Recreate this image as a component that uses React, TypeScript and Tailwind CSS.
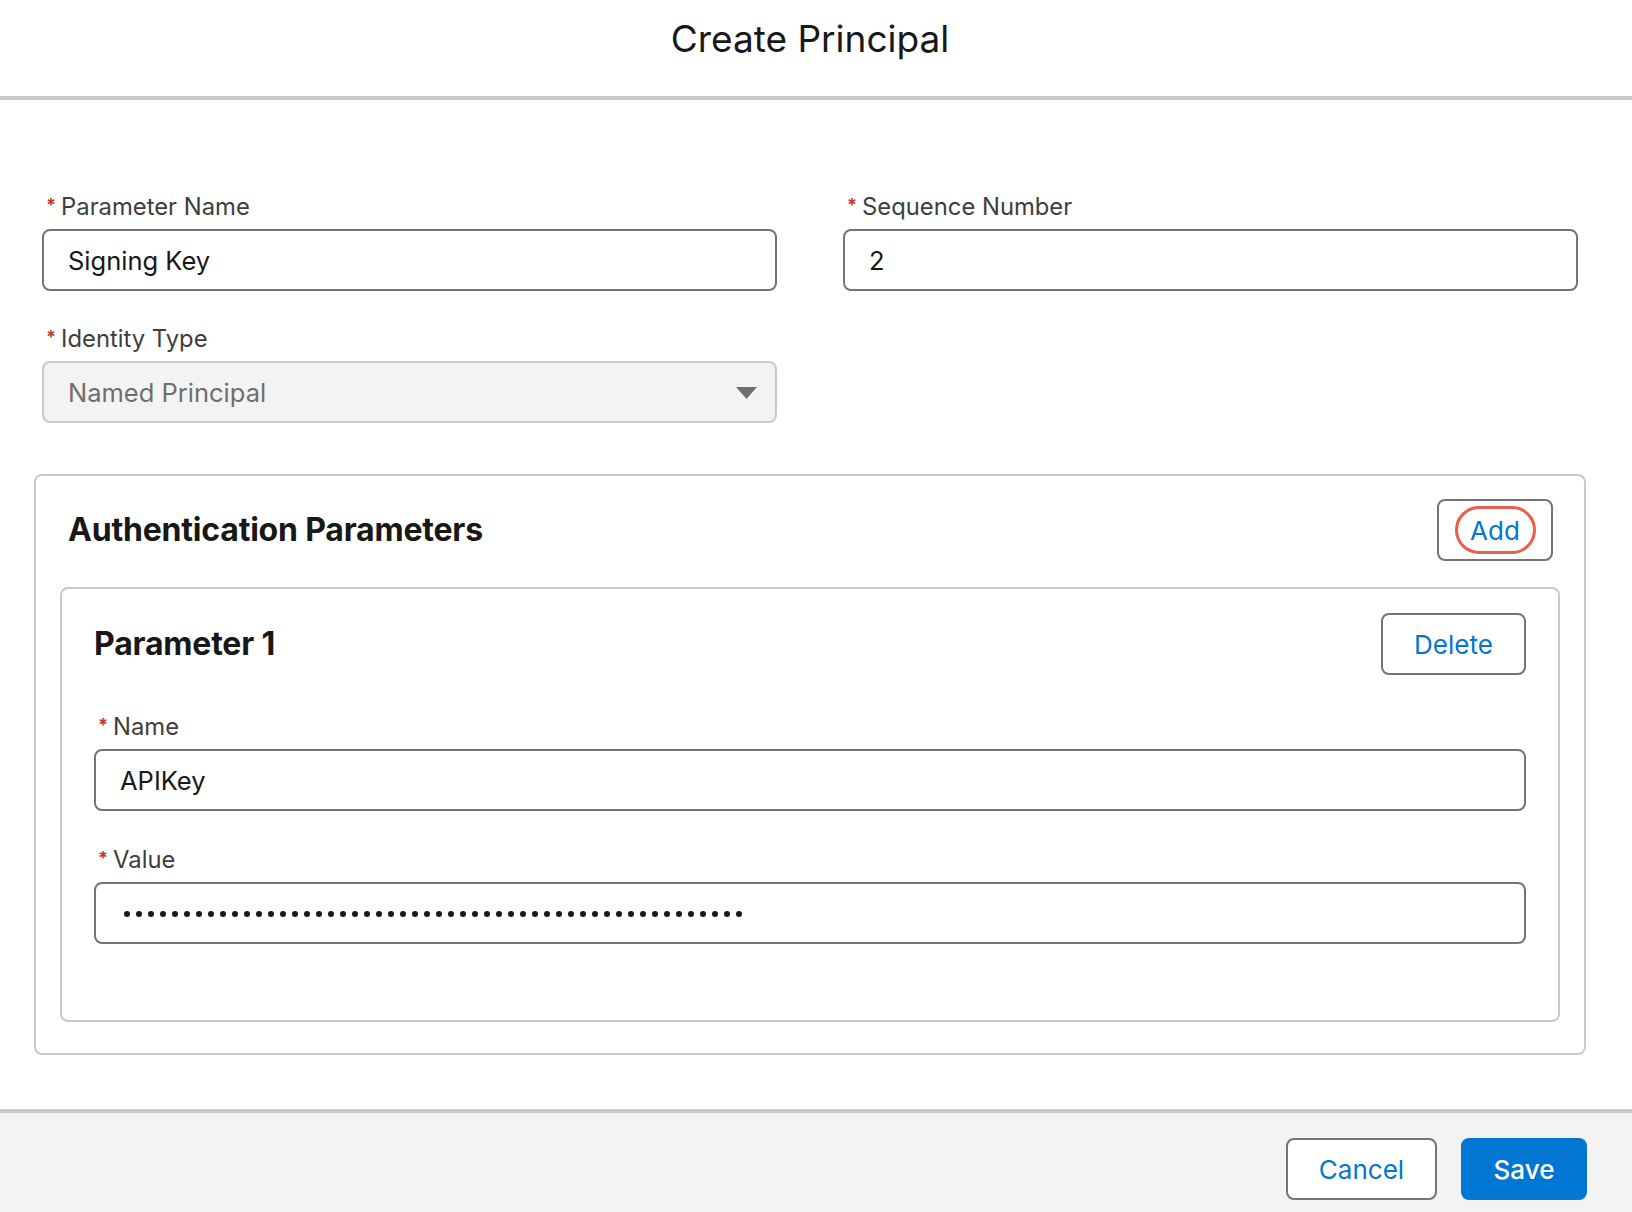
import React from "react";

function Label({ text }: { text: string }) {
  return (
    <div className="flex items-center h-[29px] pt-[1px] mb-[8px] text-[23.8px] text-[#3e3e3c]">
      <span className="ml-[4px] mr-[5px] -mt-[5px] text-[18px] font-bold text-[#c23934]">*</span>
      {text}
    </div>
  );
}

function TextField({ label, value }: { label: string; value: string }) {
  return (
    <div>
      <Label text={label} />
      <div className="h-[62px] flex items-center px-[24px] pt-[2px] border-2 border-[#747474] rounded-[8px] bg-white text-[25.5px] text-[#181818]">
        {value}
      </div>
    </div>
  );
}

export default function App() {
  const dots = Array.from({ length: 52 }, (_, i) => i);

  return (
    <div className="min-h-screen flex flex-col bg-white font-['Inter','Noto_Sans',sans-serif] text-[#181818]">
      {/* Modal header */}
      <div className="h-[100px] border-b-4 border-[#c9c9c9] flex justify-center pt-[16px] pr-[12px]">
        <h2 className="text-[37px] leading-[46px] font-normal">Create Principal</h2>
      </div>

      {/* Body */}
      <div className="pt-[92px] pl-[34px] pr-[46px] pb-[54px]">
        <div className="px-[8px] grid grid-cols-2 gap-x-[66px] gap-y-[33px]">
          <TextField label="Parameter Name" value="Signing Key" />
          <TextField label="Sequence Number" value="2" />
          <div>
            <Label text="Identity Type" />
            <div className="h-[62px] flex items-center justify-between pl-[24px] pr-[18px] pt-[2px] border-2 border-[#c9c9c9] rounded-[8px] bg-[#f3f3f3] text-[25.5px] text-[#706e6b]">
              Named Principal
              <svg width="21" height="12" viewBox="0 0 21 12">
                <polygon points="0,0 21,0 10.5,12" fill="#706e6b" />
              </svg>
            </div>
          </div>
        </div>

        {/* Authentication parameters */}
        <div className="mt-[51px] border-2 border-[#c9c9c9] rounded-[8px] px-[24px] pt-[23px] pb-[31px]">
          <div className="flex items-center justify-between h-[62px] pl-[8px] pr-[7px]">
            <h3 className="text-[32px] font-bold tracking-[-0.2px]">Authentication Parameters</h3>
            <button className="w-[116px] h-[62px] flex items-center justify-center border-2 border-[#747474] rounded-[8px] bg-white">
              <span className="w-[81px] h-[48px] flex items-center justify-center rounded-full border-[3px] border-[#e8604c] text-[26px] text-[#0176d3]">
                Add
              </span>
            </button>
          </div>

          <div className="mt-[26px] border-2 border-[#c9c9c9] rounded-[8px] px-[32px] pt-[24px] pb-[76px]">
            <div className="flex items-center justify-between h-[62px]">
              <h3 className="text-[32px] font-bold tracking-[-0.2px]">Parameter 1</h3>
              <button className="w-[145px] h-[62px] border-2 border-[#747474] rounded-[8px] bg-white text-[26px] text-[#0176d3]">
                Delete
              </button>
            </div>

            <div className="mt-[37px]">
              <TextField label="Name" value="APIKey" />
            </div>
            <div className="mt-[34px]">
              <Label text="Value" />
              <div className="h-[62px] flex items-center gap-[6.5px] px-[28px] pt-[2px] border-2 border-[#747474] rounded-[8px] bg-white">
                {dots.map((i) => (
                  <span key={i} className="w-[5.5px] h-[5.5px] rounded-full bg-[#181818]" />
                ))}
              </div>
            </div>
          </div>
        </div>
      </div>

      {/* Footer */}
      <div className="flex-1 border-t-4 border-[#c9c9c9] bg-[#f3f3f3] flex justify-end items-start gap-[24px] pt-[25px] pr-[45px]">
        <button className="w-[151px] h-[62px] border-2 border-[#747474] rounded-[8px] bg-white text-[26px] text-[#0176d3]">
          Cancel
        </button>
        <button className="w-[126px] h-[62px] border-2 border-[#0176d3] rounded-[8px] bg-[#0176d3] text-[26px] text-white font-medium">
          Save
        </button>
      </div>
    </div>
  );
}
